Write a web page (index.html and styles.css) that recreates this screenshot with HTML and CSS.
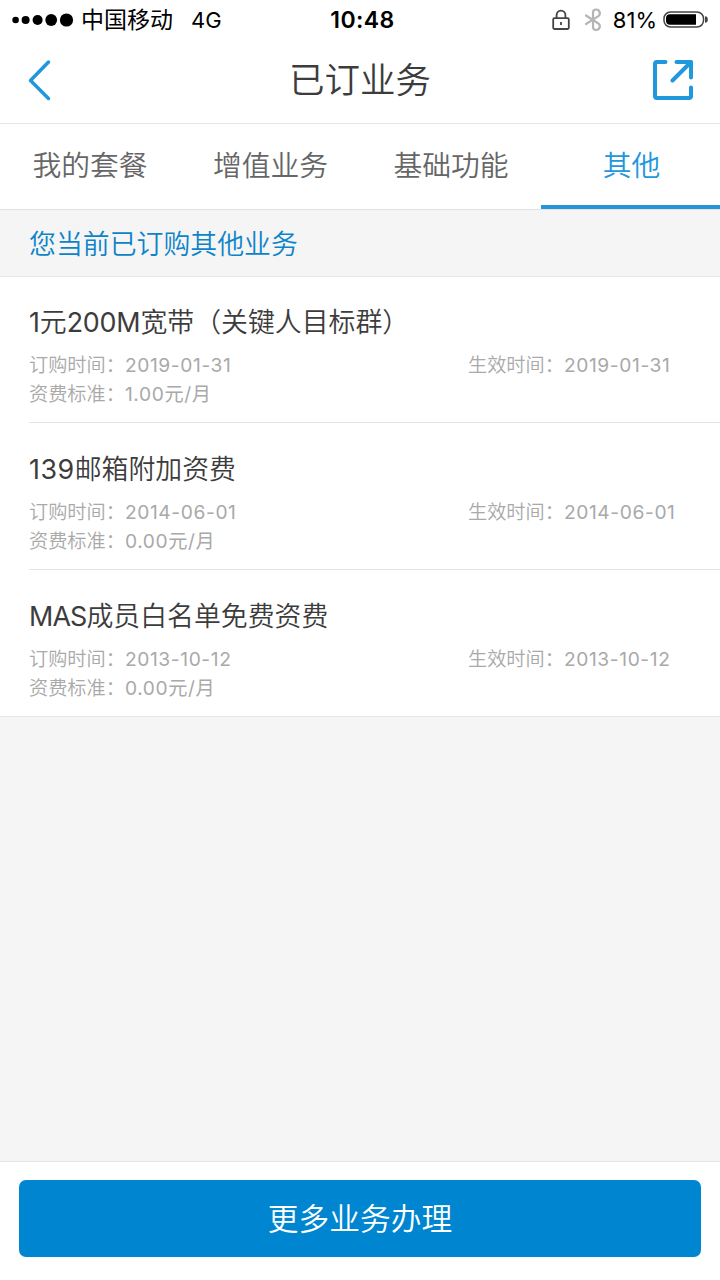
FILE: index.html
```html
<!DOCTYPE html>
<html lang="zh-CN">
<head>
    <meta charset="UTF-8" />
    <meta name="viewport" content="width=device-width, initial-scale=1" />
    <title>已订业务</title>
    <link rel="stylesheet" href="styles.css">
</head>
<body>
    <div class="status-bar">
        <div class="status-left">
            <svg class="signal" width="64" height="16" viewBox="0 0 64 16">
                <circle cx="4.6" cy="8" r="3.3" />
                <circle cx="14.6" cy="8" r="4" />
                <circle cx="26.6" cy="8" r="5" />
                <circle cx="40.2" cy="8" r="5.9" />
                <circle cx="55.5" cy="8" r="6.6" />
            </svg>
            <span class="carrier">中国移动</span>
            <span class="network">4G</span>
        </div>
        <span class="clock">10:48</span>
        <div class="status-right">
            <svg class="lock" width="18" height="22" viewBox="0 0 18 22">
                <rect x="1.2" y="9.2" width="15.6" height="10.8" rx="1.2" />
                <path d="M4.6 9V6a4.4 4.4 0 0 1 8.8 0v3M9 13v3" />
            </svg>
            <svg class="bluetooth" width="18" height="24" viewBox="0 0 18 24">
                <path d="M2 7.5l12 7.7c3.5 2.3 1.5 6.8-1.8 6.8-2 0-3.2-1-3.2-3V4.5c0-2 1.2-3 3.2-3 3.3 0 5.3 4.5 1.8 6.8L2 16" />
            </svg>
            <span class="percent">81%</span>
            <svg class="battery" width="46" height="18" viewBox="0 0 46 18">
                <rect class="shell" x="1" y="1" width="39.5" height="15" rx="6.5" />
                <path d="M7 3.2h26v10.6H7a4 4 0 0 1-4-4V7.2a4 4 0 0 1 4-4z" />
                <path class="cap" d="M42 5.2c2.3 0 2.8 1.6 2.8 3.3s-.5 3.3-2.8 3.3z" />
            </svg>
        </div>
    </div>

    <header class="nav-bar">
        <svg class="back" width="24" height="42" viewBox="0 0 24 42">
            <path d="M21.5 3L3.5 21.5l18 18" />
        </svg>
        <h1>已订业务</h1>
        <svg class="share" width="40" height="40" viewBox="0 0 40 40">
            <path d="M12.5 2H4a2 2 0 0 0-2 2v32a2 2 0 0 0 2 2h32a2 2 0 0 0 2-2V27.5" />
            <path d="M23.5 2H38v15.5M38 2L19.5 20.5" />
        </svg>
    </header>

    <nav class="tabs">
        <a class="tab">我的套餐</a>
        <a class="tab">增值业务</a>
        <a class="tab">基础功能</a>
        <a class="tab active">其他</a>
    </nav>

    <p class="notice">您当前已订购其他业务</p>

    <ul class="orders">
        <li class="order">
            <h2><span class="latin">1</span>元<span class="latin">200M</span>宽带（关键人目标群）</h2>
            <div class="meta">
                <span>订购时间：<span class="value">2019-01-31</span></span>
                <span>生效时间：<span class="value">2019-01-31</span></span>
                <span>资费标准：<span class="value">1.00元/月</span></span>
            </div>
        </li>
        <li class="order">
            <h2><span class="latin digits">139</span>邮箱附加资费</h2>
            <div class="meta">
                <span>订购时间：<span class="value">2014-06-01</span></span>
                <span>生效时间：<span class="value">2014-06-01</span></span>
                <span>资费标准：<span class="value">0.00元/月</span></span>
            </div>
        </li>
        <li class="order">
            <h2><span class="latin caps">MAS</span>成员白名单免费资费</h2>
            <div class="meta">
                <span>订购时间：<span class="value">2013-10-12</span></span>
                <span>生效时间：<span class="value">2013-10-12</span></span>
                <span>资费标准：<span class="value">0.00元/月</span></span>
            </div>
        </li>
    </ul>

    <footer class="bottom-bar">
        <button type="button" class="more">更多业务办理</button>
    </footer>
</body>
</html>
```

FILE: styles.css
```css
* {
    box-sizing: border-box;
}

body {
    display: flex;
    flex-direction: column;
    height: 1280px;
    margin: 0;
    background-color: #f5f5f5;
    color: #3c3c3c;
    font-family: Inter, "Noto Sans CJK SC", sans-serif;
    font-weight: 350;
}

h1,
h2,
p,
ul {
    margin: 0;
    padding: 0;
    font-weight: inherit;
}

svg {
    display: block;
    flex: none;
    fill: none;
}

/* status bar */
.status-bar {
    display: grid;
    grid-template-columns: 1fr auto 1fr;
    align-items: center;
    height: 40px;
    padding: 0 11px;
    background-color: #fff;
    color: #000;
    font-size: 22px;
    font-weight: 400;
    line-height: 40px;
}

.status-left,
.status-right {
    display: flex;
    align-items: center;
}

.status-right {
    justify-content: flex-end;
}

.signal {
    fill: #000;
}

.carrier {
    margin: 0 18px 0 6px;
    font-size: 23px;
}

.clock {
    padding-left: 5px;
    font-size: 23px;
    font-weight: 600;
    letter-spacing: 0.4px;
}

.lock {
    margin-right: 14px;
    stroke: #444;
    stroke-width: 1.8;
}

.bluetooth {
    margin-right: 11px;
    stroke: #b5b5b5;
    stroke-width: 2.2;
    stroke-linecap: round;
}

.percent {
    margin-right: 6px;
}

.battery {
    fill: #000;
}

.battery .shell {
    fill: none;
    stroke: #444;
    stroke-width: 1.5;
}

.battery .cap {
    fill: #444;
}

/* title bar */
.nav-bar {
    display: grid;
    grid-template-columns: 40px 1fr 40px;
    align-items: center;
    height: 84px;
    padding: 0 27px 3px;
    background-color: #fff;
    border-bottom: 1px solid #e5e5e5;
}

.nav-bar h1 {
    padding-top: 2px;
    font-size: 35.5px;
    line-height: 78px;
    text-align: center;
}

.back,
.share {
    stroke: #2197dc;
    stroke-width: 3.5;
    stroke-linecap: round;
    stroke-linejoin: round;
}

.share {
    stroke-width: 4;
}

/* tabs */
.tabs {
    display: grid;
    grid-template-columns: 180px 181px 180px 1fr;
    height: 86px;
    background-color: #fff;
    border-bottom: 1px solid #e2e2e2;
}

.tab {
    height: 85px;
    color: #666;
    font-size: 28.8px;
    line-height: 84px;
    text-align: center;
}

.tab.active {
    padding-left: 2px;
    border-bottom: 4px solid #2495d6;
    color: #2197dc;
}

.notice {
    height: 67px;
    padding-left: 29px;
    border-bottom: 1px solid #e6e6e6;
    color: #0d84c9;
    font-size: 26.88px;
    line-height: 68px;
}

/* ordered services */
.orders {
    flex: 1;
    list-style: none;
}

.order {
    height: 147px;
    padding-left: 29px;
    background-color: #fff;
}

.order:last-child {
    height: 146px;
    border-bottom: 1px solid #e5e5e5;
}

.order h2 {
    height: 74px;
    padding-top: 25px;
    font-size: 26.88px;
    line-height: 40px;
}

.latin {
    font-weight: 400;
    letter-spacing: -0.2px;
}

.latin.digits {
    letter-spacing: 0.5px;
}

.latin.caps {
    letter-spacing: -0.9px;
}

.meta {
    display: grid;
    grid-template-columns: 439px 1fr;
    grid-auto-rows: 29px;
    height: 72px;
    color: #a9a9a9;
    font-size: 19.2px;
    line-height: 29px;
}

.order:not(:last-child) .meta {
    border-bottom: 1px solid #e5e5e5;
}

.value {
    font-weight: 400;
    letter-spacing: 0.6px;
}

/* bottom button */
.bottom-bar {
    height: 119px;
    padding: 18px 19px 0;
    background-color: #fff;
    border-top: 1px solid #e5e5e5;
}

.more {
    display: block;
    width: 100%;
    height: 77px;
    padding: 0;
    border: none;
    border-radius: 7px;
    background-color: #0085d0;
    color: #fff;
    font: inherit;
    font-size: 30.72px;
    line-height: 77px;
}
```
